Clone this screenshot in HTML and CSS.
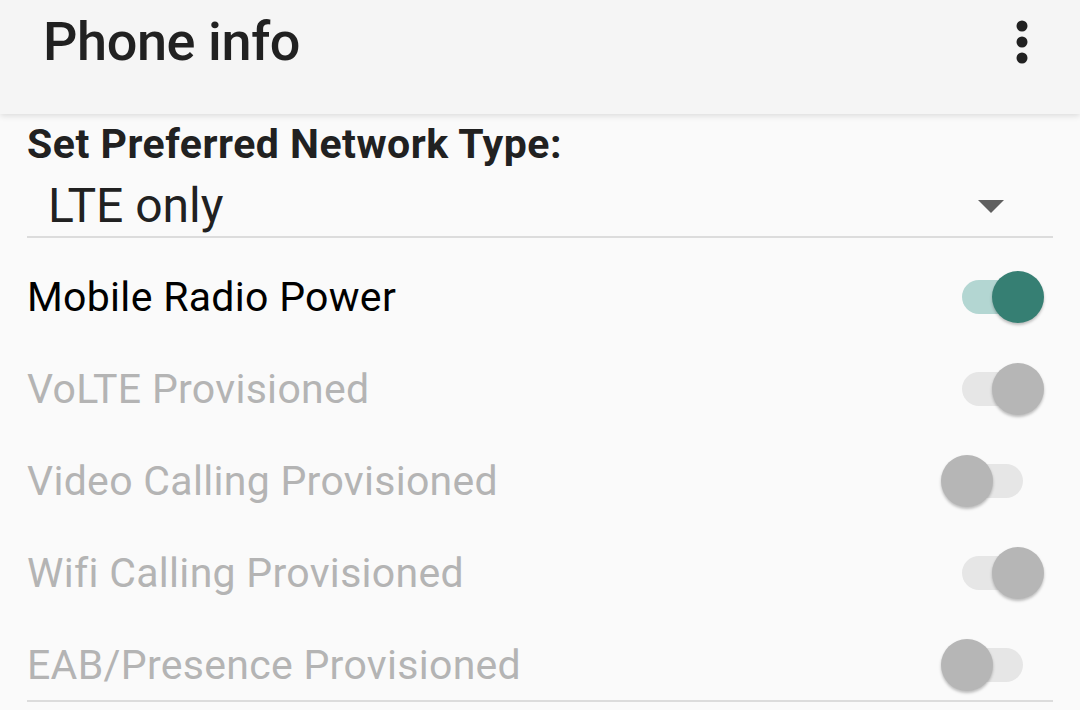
FILE: index.html
```html
<!DOCTYPE html>
<html lang="en">
<head>
  <meta charset="UTF-8" />
  <meta name="viewport" content="width=device-width, initial-scale=1.0"/>
  <title>Phone info</title>
  <link rel="stylesheet" href="styles.css">
</head>
<body>
  <header class="app-bar">
    <div class="app-bar-row">
      <h1 class="app-title">Phone info</h1>
      <button class="overflow-button" aria-label="More options">
        <svg width="12" height="44" viewBox="0 0 12 44">
          <circle cx="6" cy="6" r="5.5" fill="#212121"/>
          <circle cx="6" cy="22" r="5.5" fill="#212121"/>
          <circle cx="6" cy="38" r="5.5" fill="#212121"/>
        </svg>
      </button>
    </div>
  </header>

  <main class="content">
    <div class="network-label">Set Preferred Network Type:</div>
    <div class="spinner">
      <span class="spinner-value">LTE only</span>
      <span class="spinner-arrow"></span>
    </div>

    <div class="toggle-list">
      <div class="toggle-row">
        <span class="toggle-label">Mobile Radio Power</span>
        <span class="switch on"><span class="track"></span><span class="thumb"></span></span>
      </div>
      <div class="toggle-row disabled">
        <span class="toggle-label">VoLTE Provisioned</span>
        <span class="switch on"><span class="track"></span><span class="thumb"></span></span>
      </div>
      <div class="toggle-row disabled">
        <span class="toggle-label">Video Calling Provisioned</span>
        <span class="switch"><span class="track"></span><span class="thumb"></span></span>
      </div>
      <div class="toggle-row disabled">
        <span class="toggle-label">Wifi Calling Provisioned</span>
        <span class="switch on"><span class="track"></span><span class="thumb"></span></span>
      </div>
      <div class="toggle-row disabled">
        <span class="toggle-label">EAB/Presence Provisioned</span>
        <span class="switch"><span class="track"></span><span class="thumb"></span></span>
      </div>
    </div>
  </main>
</body>
</html>
```

FILE: styles.css
```css
:root {
  --bg-color: #fafafa;
  --bar-bg: #f5f5f5;
  --text-color: #212121;
  --disabled-text: #b4b4b4;
  --divider: #dcdcdc;
  --accent-color: #367f73;
  --accent-track: #b3d6d2;
  --off-thumb: #b6b6b6;
  --off-track: #e6e6e6;
}

html, body {
  height: 100%;
}

body {
  margin: 0;
  font-family: Roboto, 'Noto Sans', sans-serif;
  background-color: var(--bg-color);
  color: var(--text-color);
  overflow: hidden;
}

.app-bar {
  height: 114px;
  background-color: var(--bar-bg);
  box-shadow: 0 2px 6px rgba(0,0,0,0.12);
  position: relative;
  z-index: 1;
}

.app-bar-row {
  height: 84px;
  display: flex;
  align-items: center;
  justify-content: space-between;
  padding: 0 52px 0 43px;
}

.app-title {
  margin: 0;
  font-size: 54px;
  font-weight: 500;
  line-height: 1;
  letter-spacing: -0.4px;
}

.overflow-button {
  border: none;
  background: none;
  padding: 0;
  display: flex;
}

.content {
  padding: 11px 27px 0 27px;
}

.network-label {
  font-size: 41px;
  font-weight: 700;
  line-height: 1;
  letter-spacing: 0.5px;
  margin-top: -1px;
}

.spinner {
  margin-top: 17px;
  display: flex;
  align-items: center;
  justify-content: space-between;
  padding: 0 49px 6px 21px;
  border-bottom: 2px solid var(--divider);
}

.spinner-value {
  font-size: 48px;
  line-height: 1;
}

.spinner-arrow {
  width: 0;
  height: 0;
  border-left: 13px solid transparent;
  border-right: 13px solid transparent;
  border-top: 13px solid #5f5f5f;
}

.toggle-list {
  margin-top: 24px;
  display: flex;
  flex-direction: column;
  gap: 22px;
  border-bottom: 2px solid var(--divider);
}

.toggle-row {
  height: 70px;
  display: flex;
  align-items: center;
  justify-content: space-between;
}

.toggle-label {
  font-size: 41px;
  line-height: 1;
  letter-spacing: 0.3px;
  color: #000;
}

.toggle-row.disabled .toggle-label {
  color: var(--disabled-text);
}

.switch {
  position: relative;
  width: 104px;
  height: 56px;
  margin-right: 8px;
}

.switch .track {
  position: absolute;
  left: 21px;
  top: 11px;
  width: 61px;
  height: 34px;
  border-radius: 17px;
  background-color: var(--off-track);
}

.switch .thumb {
  position: absolute;
  left: 0;
  top: 2px;
  width: 52px;
  height: 52px;
  border-radius: 50%;
  background-color: var(--off-thumb);
  box-shadow: 0 2px 3px rgba(0,0,0,0.25);
}

.switch.on .thumb {
  left: 51px;
}

.toggle-row:not(.disabled) .switch.on .track {
  background-color: var(--accent-track);
}

.toggle-row:not(.disabled) .switch.on .thumb {
  background-color: var(--accent-color);
}
```
